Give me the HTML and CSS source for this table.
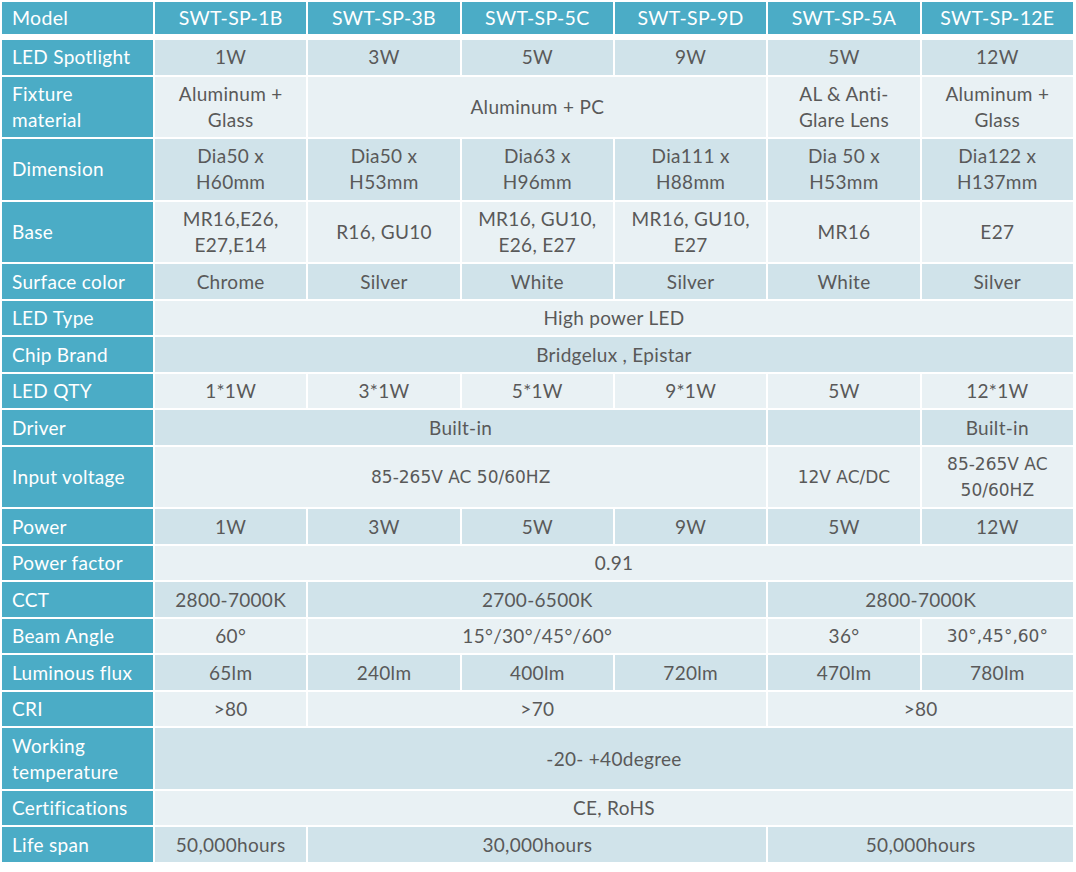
FILE: index.html
```html
<!DOCTYPE html>
<html>
<head>
<meta charset="utf-8">
<link rel="stylesheet" href="styles.css">
</head>
<body>
<table class="spec">
<colgroup>
<col class="c0"><col class="c"><col class="c"><col class="c"><col class="c"><col class="c"><col class="c">
</colgroup>
<thead>
<tr class="hd"><th class="lbl">Model</th><th>SWT-SP-1B</th><th>SWT-SP-3B</th><th>SWT-SP-5C</th><th>SWT-SP-9D</th><th>SWT-SP-5A</th><th>SWT-SP-12E</th></tr>
</thead>
<tbody>
<tr class="dk s"><th class="lbl">LED Spotlight</th><td>1W</td><td>3W</td><td>5W</td><td>9W</td><td>5W</td><td>12W</td></tr>
<tr class="lt d"><th class="lbl">Fixture<br>material</th><td>Aluminum +<br>Glass</td><td colspan="3">Aluminum + PC</td><td>AL &amp; Anti-<br>Glare Lens</td><td>Aluminum +<br>Glass</td></tr>
<tr class="dk d"><th class="lbl">Dimension</th><td>Dia50 x<br>H60mm</td><td>Dia50 x<br>H53mm</td><td>Dia63 x<br>H96mm</td><td>Dia111 x<br>H88mm</td><td>Dia 50 x<br>H53mm</td><td>Dia122 x<br>H137mm</td></tr>
<tr class="lt d"><th class="lbl">Base</th><td>MR16,E26,<br>E27,E14</td><td>R16, GU10</td><td>MR16, GU10,<br>E26, E27</td><td>MR16, GU10,<br>E27</td><td>MR16</td><td>E27</td></tr>
<tr class="dk s"><th class="lbl">Surface color</th><td>Chrome</td><td>Silver</td><td>White</td><td>Silver</td><td>White</td><td>Silver</td></tr>
<tr class="lt s"><th class="lbl">LED Type</th><td colspan="6">High power LED</td></tr>
<tr class="dk s"><th class="lbl">Chip Brand</th><td colspan="6">Bridgelux , Epistar</td></tr>
<tr class="lt s"><th class="lbl">LED QTY</th><td>1*1W</td><td>3*1W</td><td>5*1W</td><td>9*1W</td><td>5W</td><td>12*1W</td></tr>
<tr class="dk s"><th class="lbl">Driver</th><td colspan="4">Built-in</td><td></td><td>Built-in</td></tr>
<tr class="lt d"><th class="lbl">Input voltage</th><td colspan="4" class="alt">85-265V AC 50/60HZ</td><td class="alt">12V AC/DC</td><td class="alt">85-265V AC<br>50/60HZ</td></tr>
<tr class="dk s"><th class="lbl">Power</th><td>1W</td><td>3W</td><td>5W</td><td>9W</td><td>5W</td><td>12W</td></tr>
<tr class="lt s"><th class="lbl">Power factor</th><td colspan="6">0.91</td></tr>
<tr class="dk s"><th class="lbl">CCT</th><td>2800-7000K</td><td colspan="3">2700-6500K</td><td colspan="2">2800-7000K</td></tr>
<tr class="lt s"><th class="lbl">Beam Angle</th><td>60°</td><td colspan="3">15°/30°/45°/60°</td><td>36°</td><td class="alt">30°,45°,60°</td></tr>
<tr class="dk s"><th class="lbl">Luminous flux</th><td>65lm</td><td>240lm</td><td>400lm</td><td>720lm</td><td>470lm</td><td>780lm</td></tr>
<tr class="lt s"><th class="lbl">CRI</th><td>&gt;80</td><td colspan="3">&gt;70</td><td colspan="2">&gt;80</td></tr>
<tr class="dk d"><th class="lbl">Working<br>temperature</th><td colspan="6">-20- +40degree</td></tr>
<tr class="lt s"><th class="lbl">Certifications</th><td colspan="6">CE, RoHS</td></tr>
<tr class="dk s"><th class="lbl">Life span</th><td>50,000hours</td><td colspan="3">30,000hours</td><td colspan="2">50,000hours</td></tr>
</tbody>
</table>
</body>
</html>
```
FILE: styles.css
```css
html, body {
  margin: 0;
  padding: 0;
  background: #ffffff;
}
.spec {
  border-collapse: separate;
  border-spacing: 2px;
  table-layout: fixed;
  width: 1075px;
  font-family: Lato, "Liberation Sans", sans-serif;
  font-size: 19px;
  letter-spacing: 0.3px;
  color: #595959;
}
.c0 { width: 151px; }
.spec th, .spec td {
  padding: 0;
  text-align: center;
  vertical-align: middle;
  line-height: 26px;
  font-weight: normal;
}
.hd th {
  background: #4bacc6;
  color: #ffffff;
  height: 32px;
  font-size: 19.5px;
  border-bottom: 4px solid #ffffff;
}
.spec .lbl {
  background: #4bacc6;
  color: #ffffff;
  text-align: left;
  padding-left: 10px;
}
.s th, .s td { height: 34.5px; }
.d th, .d td { height: 60.6px; }
.dk td { background: #d0e3ea; }
.lt td { background: #e9f1f4; }
.spec td.alt {
  font-family: "DejaVu Sans", Verdana, sans-serif;
  font-size: 17px;
  letter-spacing: 0;
}
```
